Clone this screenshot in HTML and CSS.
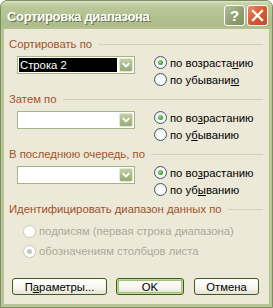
FILE: index.html
```html
<!DOCTYPE html>
<html lang="ru">
<head>
<meta charset="utf-8">
<title>Сортировка диапазона</title>
<link rel="stylesheet" href="styles.css">
</head>
<body>
<div class="window">
  <div class="titlebar">
    <span class="title">Сортировка диапазона</span>
    <div class="tb-btns">
      <span class="tb-btn help">?</span>
      <span class="tb-btn close"><svg width="13" height="13" viewBox="0 0 13 13"><path d="M2 2 L11 11 M11 2 L2 11" stroke="#fff" stroke-width="2.4" stroke-linecap="square"/></svg></span>
    </div>
  </div>
  <div class="body">
    <div class="group">
      <div class="legend"><span>Сортировать по</span></div>
      <div class="row">
        <div class="combo"><span class="field selected">Строка 2</span><span class="arrow"><svg width="13" height="12" viewBox="0 0 13 12"><path d="M3 4 L6.5 7.5 L10 4" fill="none" stroke="#fff" stroke-width="2"/></svg></span></div>
        <div class="radios">
          <label class="radio"><span class="dot checked"></span>по возраста<u>н</u>ию</label>
          <label class="radio"><span class="dot"></span>по убывани<u>ю</u></label>
        </div>
      </div>
    </div>
    <div class="group">
      <div class="legend"><span>Затем по</span></div>
      <div class="row">
        <div class="combo"><span class="field"></span><span class="arrow"><svg width="13" height="12" viewBox="0 0 13 12"><path d="M3 4 L6.5 7.5 L10 4" fill="none" stroke="#fff" stroke-width="2"/></svg></span></div>
        <div class="radios">
          <label class="radio"><span class="dot checked"></span>по во<u>з</u>растанию</label>
          <label class="radio"><span class="dot"></span>по у<u>б</u>ыванию</label>
        </div>
      </div>
    </div>
    <div class="group">
      <div class="legend"><span>В последнюю очередь, по</span></div>
      <div class="row">
        <div class="combo"><span class="field"></span><span class="arrow"><svg width="13" height="12" viewBox="0 0 13 12"><path d="M3 4 L6.5 7.5 L10 4" fill="none" stroke="#fff" stroke-width="2"/></svg></span></div>
        <div class="radios">
          <label class="radio"><span class="dot checked"></span>по во<u>з</u>растанию</label>
          <label class="radio"><span class="dot"></span>по уб<u>ы</u>ванию</label>
        </div>
      </div>
    </div>
    <div class="group last">
      <div class="legend"><span>Идентифицировать диапазон данных по</span></div>
      <div class="radios disabled">
        <label class="radio"><span class="dot"></span>подписям (первая строка диапазона)</label>
        <label class="radio"><span class="dot checked"></span>обозначениям столбцов листа</label>
      </div>
    </div>
    <div class="buttons">
      <button class="btn params">П<u>а</u>раметры...</button>
      <button class="btn ok">OK</button>
      <button class="btn cancel">Отмена</button>
    </div>
  </div>
</div>
</body>
</html>
```
FILE: styles.css
```css
html, body {
  margin: 0;
  padding: 0;
  background: #ffffff;
}
body {
  font-family: "Liberation Sans", Arial, sans-serif;
  font-size: 11.3px;
  color: #000;
}
.window {
  width: 273px;
  height: 308px;
  box-sizing: border-box;
  display: flex;
  flex-direction: column;
  border: 1px solid #7e8d5f;
  border-radius: 7px 7px 0 0;
  background: #b8c596;
}
.titlebar {
  height: 28px;
  display: flex;
  align-items: center;
  padding: 0 4px 0 6px;
  border-radius: 6px 6px 0 0;
  background: linear-gradient(to bottom, #e2e9cf 0px, #c8d3aa 2px, #b9c79a 6px, #b3c192 16px, #aebc8b 24px, #b4c293 28px);
}
.title {
  flex: 1;
  padding-top: 2px;
  color: #ffffff;
  font-family: "Liberation Sans", Arial, sans-serif;
  font-weight: bold;
  font-size: 13px;
  letter-spacing: -0.3px;
  text-shadow: 1px 1px 0 #66724a;
}
.tb-btns {
  display: flex;
  gap: 2px;
}
.tb-btn {
  width: 19px;
  height: 19px;
  border: 1px solid #ffffff;
  border-radius: 3px;
  display: flex;
  align-items: center;
  justify-content: center;
  color: #fff;
  font-family: "Liberation Sans", Arial, sans-serif;
  font-weight: bold;
  font-size: 15px;
}
.help {
  background: linear-gradient(135deg, #b3c09a 0%, #93a474 50%, #7d8f5c 100%);
}
.close {
  background: linear-gradient(135deg, #ea8a66 0%, #d9582e 50%, #c64a22 100%);
}
.body {
  flex: 1;
  margin: 0 3px 3px;
  background: #ece9d8;
  padding: 9px 6px 9px 5px;
  display: flex;
  flex-direction: column;
}
.group {
  height: 55px;
}
.group.last {
  height: auto;
}
.legend {
  height: 13px;
  display: flex;
  align-items: center;
  color: #a2522a;
  line-height: 13px;
  white-space: nowrap;
}
.legend::after {
  content: "";
  flex: 1;
  height: 1px;
  background: #d0d0bf;
  margin-left: 6px;
}
.row {
  display: flex;
  margin-top: 5px;
  padding-left: 8px;
}
.combo {
  width: 118px;
  height: 18px;
  box-sizing: border-box;
  border: 1px solid #a4b585;
  background: #fff;
  padding: 1px;
  display: flex;
}
.field {
  flex: 1;
  margin-right: 2px;
  line-height: 14px;
  padding-left: 1px;
  white-space: nowrap;
}
.field.selected {
  background: #000;
  color: #fff;
}
.arrow {
  width: 14px;
  height: 14px;
  box-sizing: border-box;
  border: 1px solid #e1e6d3;
  border-radius: 2px;
  background: linear-gradient(to bottom, #c4cfa5, #a7b685 60%, #9aab76);
  display: flex;
  align-items: center;
  justify-content: center;
}
.radios {
  margin-left: 19px;
  margin-top: -2px;
  display: flex;
  flex-direction: column;
}
.radio {
  height: 17px;
  display: flex;
  align-items: center;
  white-space: nowrap;
}
.dot {
  width: 13px;
  height: 13px;
  box-sizing: border-box;
  border: 1px solid #42566b;
  border-radius: 50%;
  background: radial-gradient(circle at 60% 60%, #ffffff 30%, #e3e1d6 100%);
  margin-right: 3px;
  display: flex;
  align-items: center;
  justify-content: center;
  flex: none;
}
.dot.checked::after {
  content: "";
  width: 5px;
  height: 5px;
  border-radius: 50%;
  background: radial-gradient(circle at 40% 40%, #9be08a 0%, #3aa63a 60%, #21862a 100%);
}
.radios.disabled {
  margin-left: 14px;
  margin-top: 5px;
  color: #aca899;
}
.radios.disabled .radio {
  height: 20px;
}
.radios.disabled .dot {
  border-color: #cac8bb;
  background: #ffffff;
}
.radios.disabled .dot.checked::after {
  background: #cac8bb;
}
.buttons {
  margin-top: auto;
  margin-left: 3px;
  display: flex;
}
.btn {
  height: 17px;
  box-sizing: border-box;
  border: 1px solid #3d5c1c;
  border-radius: 3px;
  background: linear-gradient(to bottom, #ffffff 0%, #f6f5ee 60%, #e4e2d4 100%);
  font-family: "Liberation Sans", Arial, sans-serif;
  font-size: 11.3px;
  color: #000;
  padding: 0;
  line-height: 14px;
}
.params { width: 95px; }
.ok {
  width: 68px;
  margin-left: 9px;
  box-shadow: inset 0 0 0 1px #c3d8a0, inset 0 0 0 2px #a2c277;
}
.cancel {
  width: 65px;
  margin-left: 10px;
}
```
